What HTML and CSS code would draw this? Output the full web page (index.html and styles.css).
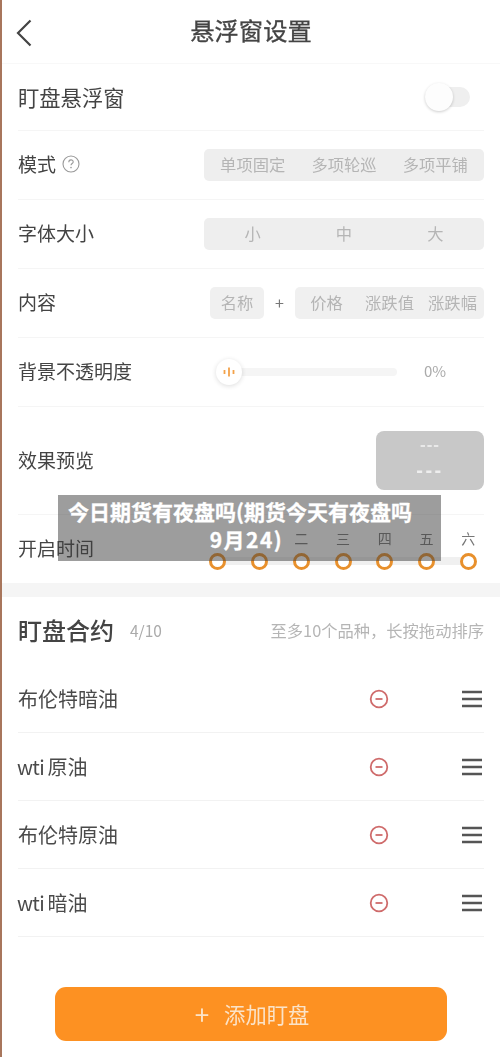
FILE: index.html
```html
<!DOCTYPE html>
<html lang="zh">
<head>
<meta charset="utf-8">
<title>悬浮窗设置</title>
<link rel="stylesheet" href="styles.css">
</head>
<body>
<div class="app">
  <header class="nav">
    <svg class="back" viewBox="0 0 16 28" width="16" height="28"><path d="M14.500 1.500 2 14l12.500 12.500" fill="none" stroke="#444" stroke-width="2.200"/></svg>
    <h1 class="title">悬浮窗设置</h1>
  </header>
  <section class="settings">
    <div class="row row-switch">
      <span class="label label-lg">盯盘悬浮窗</span>
      <span class="switch"><span class="knob"></span></span>
    </div>
    <div class="row">
      <span class="label">模式<svg class="help" viewBox="0 0 18 18" width="18" height="18"><circle cx="9" cy="9" r="8" fill="none" stroke="#999" stroke-width="1.100"/><path d="M6.800 7.200c0-3 4.400-3 4.400-.3 0 1.700-2.200 1.600-2.200 3.400" fill="none" stroke="#999" stroke-width="1.100"/><circle cx="9" cy="12.600" r=".8" fill="#999"/></svg></span>
      <div class="seg seg-full"><span>单项固定</span><span>多项轮巡</span><span>多项平铺</span></div>
    </div>
    <div class="row">
      <span class="label">字体大小</span>
      <div class="seg seg-full"><span>小</span><span>中</span><span>大</span></div>
    </div>
    <div class="row">
      <span class="label">内容</span>
      <div class="content-opts">
        <div class="seg seg-name"><span>名称</span></div>
        <span class="plus">+</span>
        <div class="seg seg-fields"><span>价格</span><span>涨跌值</span><span>涨跌幅</span></div>
      </div>
    </div>
    <div class="row">
      <span class="label">背景不透明度</span>
      <div class="slider">
        <div class="track"><span class="thumb"><svg viewBox="0 0 12 12" width="12" height="12"><path d="M1.500 4v4M6 1.500v9M10.500 4v4" stroke="#f3a24a" stroke-width="1.800" fill="none"/></svg></span></div>
        <span class="pct">0%</span>
      </div>
    </div>
    <div class="row row-preview">
      <span class="label">效果预览</span>
      <div class="preview"><span class="dash">---</span><span class="dash dash-lg">---</span></div>
    </div>
    <div class="row row-time">
      <span class="label">开启时间</span>
      <div class="days">
        <div class="day"><i></i><b></b></div>
        <div class="day"><i></i><b></b></div>
        <div class="day"><i>二</i><b></b></div>
        <div class="day"><i>三</i><b></b></div>
        <div class="day"><i>四</i><b></b></div>
        <div class="day"><i>五</i><b></b></div>
        <div class="day"><i>六</i><b></b></div>
      </div>
    </div>
  </section>
  <section class="watch">
    <div class="watch-head">
      <h2 class="watch-title">盯盘合约</h2>
      <span class="count">4/10</span>
      <span class="hint">至多10个品种，长按拖动排序</span>
    </div>
    <ul class="list">
      <li class="item"><span class="name">布伦特暗油</span><svg class="minus" viewBox="0 0 20 20" width="20" height="20"><circle cx="10" cy="10" r="8.300" fill="none" stroke="#cf6b6b" stroke-width="1.800"/><path d="M6.500 10h7" stroke="#cf6b6b" stroke-width="1.800"/></svg><svg class="drag" viewBox="0 0 22 18" width="22" height="18"><path d="M2 2h20M2 9h20M2 16h20" stroke="#555" stroke-width="2.400"/></svg></li>
      <li class="item"><span class="name"><span class="latin">wti</span> 原油</span><svg class="minus" viewBox="0 0 20 20" width="20" height="20"><circle cx="10" cy="10" r="8.300" fill="none" stroke="#cf6b6b" stroke-width="1.800"/><path d="M6.500 10h7" stroke="#cf6b6b" stroke-width="1.800"/></svg><svg class="drag" viewBox="0 0 22 18" width="22" height="18"><path d="M2 2h20M2 9h20M2 16h20" stroke="#555" stroke-width="2.400"/></svg></li>
      <li class="item"><span class="name">布伦特原油</span><svg class="minus" viewBox="0 0 20 20" width="20" height="20"><circle cx="10" cy="10" r="8.300" fill="none" stroke="#cf6b6b" stroke-width="1.800"/><path d="M6.500 10h7" stroke="#cf6b6b" stroke-width="1.800"/></svg><svg class="drag" viewBox="0 0 22 18" width="22" height="18"><path d="M2 2h20M2 9h20M2 16h20" stroke="#555" stroke-width="2.400"/></svg></li>
      <li class="item"><span class="name"><span class="latin">wti</span> 暗油</span><svg class="minus" viewBox="0 0 20 20" width="20" height="20"><circle cx="10" cy="10" r="8.300" fill="none" stroke="#cf6b6b" stroke-width="1.800"/><path d="M6.500 10h7" stroke="#cf6b6b" stroke-width="1.800"/></svg><svg class="drag" viewBox="0 0 22 18" width="22" height="18"><path d="M2 2h20M2 9h20M2 16h20" stroke="#555" stroke-width="2.400"/></svg></li>
    </ul>
    <div class="add-wrap"><button class="add"><span class="add-plus">+</span>添加盯盘</button></div>
  </section>
</div>
<div class="caption"><span class="cap-line">今日期货有夜盘吗(期货今天有夜盘吗</span><span class="cap-line cap-second">9月24)</span></div>
</body>
</html>
```

FILE: styles.css
```css
* { box-sizing: border-box; }
html, body { margin: 0; padding: 0; }
body {
  width: 500px;
  height: 1057px;
  overflow: hidden;
  position: relative;
  background: #fff;
  font-family: "Noto Sans CJK SC", "Noto Sans", sans-serif;
  color: #444;
  border-left: 2px solid #a8765c;
}
.app { width: 498px; filter: blur(0.5px); }
.nav { height: 64px; display: flex; align-items: center; justify-content: center; position: relative; border-bottom: 1px solid #f8f8f8; }
.back { position: absolute; left: 14px; top: 19px; }
.title { margin: -2px 0 0; font-size: 24.300px; font-weight: 400; color: #444; line-height: 1; -webkit-text-stroke: .3px #444; }
.settings { border-bottom: 14px solid #f5f5f5; margin-left: -2px; padding: 0 16px 0 18px; width: 500px; }
.row { height: 69px; display: flex; align-items: center; justify-content: space-between; border-bottom: 1px solid #f5f5f5; }
.row-switch { height: 67px; }
.row-preview { height: 108px; }
.row-time { height: 68px; border-bottom: 0; }
.label { font-size: 19px; line-height: 1; color: #444; display: flex; align-items: center; margin-top: -3px; }
.label-lg { font-size: 21.300px; margin-top: -1px; }
.help { margin-left: 6px; }
.switch { width: 45px; height: 20px; border-radius: 10px; background: #efefef; position: relative; margin-right: 14px; }
.knob { position: absolute; left: 0; top: -4px; width: 28px; height: 28px; border-radius: 50%; background: #fdfdfd; box-shadow: 0 1px 3px rgba(0,0,0,.2); }
.seg { background: #eeeeee; border-radius: 5px; height: 32px; padding-bottom: 2px; display: flex; align-items: center; font-size: 16.300px; color: #b5b5b5; }
.seg span { flex: 1; text-align: center; line-height: 1; white-space: nowrap; }
.seg-full { width: 280px; padding-left: 3px; padding-right: 3px; }
.content-opts { display: flex; align-items: center; }
.seg-name { width: 54px; background: #f0f0f0; }
.plus { width: 31px; margin-top: -2px; text-align: center; font-size: 16px; color: #777; line-height: 1; }
.seg-fields { width: 189px; background: #f0f0f0; }
.slider { display: flex; align-items: center; width: 263px; position: relative; }
.track { width: 176px; height: 8px; border-radius: 4px; background: #f5f5f5; position: relative; }
.thumb { position: absolute; left: -5px; top: -9px; width: 26px; height: 26px; border-radius: 50%; background: #fff; box-shadow: 0 1px 5px rgba(0,0,0,.14); display: flex; align-items: center; justify-content: center; }
.pct { margin: -3px 0 0 27px; font-size: 15px; color: #aaa; line-height: 1; }
.preview { width: 108px; height: 59px; background: #c8c8c8; border-radius: 8px; display: flex; flex-direction: column; align-items: center; color: #e9e9e9; font-family: "Liberation Sans", sans-serif; font-size: 17px; line-height: 1; padding-top: 5px; font-weight: 700; }
.dash { height: 17px; letter-spacing: 1px; }
.dash-lg { margin-top: 7px; font-size: 20px; height: 20px; letter-spacing: 2.500px; color: #eee; }
.days { display: flex; width: 292px; margin-right: -5px; align-self: flex-start; background: linear-gradient(#f0f0f0, #f0f0f0) no-repeat 21px 42px / 250px 8px; }
.day { flex: 1; display: flex; flex-direction: column; align-items: center; }
.day i { font-style: normal; font-size: 14px; line-height: 16px; height: 16px; margin-top: 15px; color: #777; }
.day b { display: block; width: 17px; height: 17px; margin-top: 7px; border-radius: 50%; background: #fff; border: 3px solid #e8902c; }
.watch { width: 500px; margin-left: -2px; padding: 0 16px 0 18px; }
.watch-head { height: 68px; display: flex; align-items: center; }
.watch-title { margin: -2px 0 0; font-size: 24px; font-weight: 500; color: #444; line-height: 1; }
.count { margin: -1px 0 0 16px; font-size: 15.500px; color: #aaa; line-height: 1; }
.hint { margin: -2px 0 0 auto; font-size: 16.300px; color: #b5b5b5; line-height: 1; white-space: nowrap; }
.list { list-style: none; margin: 0; padding: 0; }
.item { height: 68px; display: flex; align-items: center; border-bottom: 1px solid #f2f2f2; }
.name { flex: 1; font-size: 20px; line-height: 1; color: #4a4a4a; }
.latin { letter-spacing: -.7px; margin-left: -1px; margin-right: -1px; }
.minus { margin-right: 71px; }
.drag { margin-right: 2px; }
.add-wrap { padding: 50px 0 0 37px; }
.add { display: flex; align-items: center; justify-content: center; width: 392px; height: 54px; border: 0; border-radius: 11px; background: #fd9122; color: #fbe3c8; font-family: inherit; font-size: 21.300px; line-height: 1; padding: 0 0 0 2px; }
.add-plus { font-size: 26px; margin-right: 15px; font-weight: 400; line-height: 1; }
.caption { position: absolute; left: 56px; top: 495px; width: 383px; height: 66px; background: rgba(60,60,60,.5); color: #fff; font-size: 21px; font-weight: 700; line-height: 28px; padding: 2px 10px 0; -webkit-text-stroke: .3px #fff; }
.cap-line { display: block; white-space: nowrap; }
.cap-second { text-align: center; letter-spacing: 1.500px; margin-left: -6px; }
```
